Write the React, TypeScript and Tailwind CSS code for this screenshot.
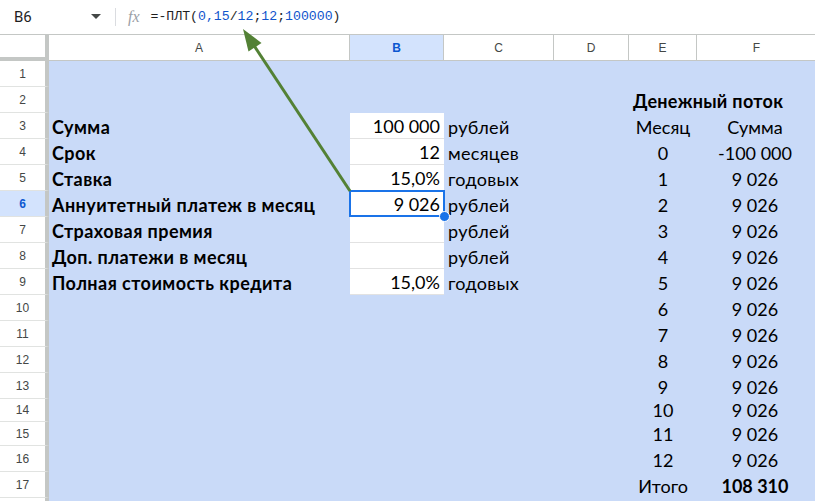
import React from 'react';

// column widths in px: row header, A..F
const cols = [
  { key: 'A', w: 'w-[301px]' },
  { key: 'B', w: 'w-[94px]' },
  { key: 'C', w: 'w-[110px]' },
  { key: 'D', w: 'w-[75px]' },
  { key: 'E', w: 'w-[68px]' },
  { key: 'F', w: 'w-[120px]' },
];

type Row = {
  n: number;
  h: string;
  a?: string;
  b?: string;
  white?: boolean;
  c?: string;
  e?: string;
  f?: string;
  bold?: boolean;
  title?: string;
  hideNum?: boolean;
};

const rows: Row[] = [
  { n: 1, h: 'h-[26px]' },
  { n: 2, h: 'h-[26px]', title: 'Денежный поток' },
  { n: 3, h: 'h-[26px]', a: 'Сумма', b: '100 000', white: true, c: 'рублей', e: 'Месяц', f: 'Сумма' },
  { n: 4, h: 'h-[26px]', a: 'Срок', b: '12', white: true, c: 'месяцев', e: '0', f: '-100 000' },
  { n: 5, h: 'h-[26px]', a: 'Ставка', b: '15,0%', white: true, c: 'годовых', e: '1', f: '9 026' },
  { n: 6, h: 'h-[26px]', a: 'Аннуитетный платеж в месяц', b: '9 026', white: true, c: 'рублей', e: '2', f: '9 026' },
  { n: 7, h: 'h-[26px]', a: 'Страховая премия', b: '', white: true, c: 'рублей', e: '3', f: '9 026' },
  { n: 8, h: 'h-[26px]', a: 'Доп. платежи в месяц', b: '', white: true, c: 'рублей', e: '4', f: '9 026' },
  { n: 9, h: 'h-[26px]', a: 'Полная стоимость кредита', b: '15,0%', white: true, c: 'годовых', e: '5', f: '9 026' },
  { n: 10, h: 'h-[26px]', e: '6', f: '9 026' },
  { n: 11, h: 'h-[26px]', e: '7', f: '9 026' },
  { n: 12, h: 'h-[26px]', e: '8', f: '9 026' },
  { n: 13, h: 'h-[26px]', e: '9', f: '9 026' },
  { n: 14, h: 'h-[23px]', e: '10', f: '9 026' },
  { n: 15, h: 'h-[24px]', e: '11', f: '9 026' },
  { n: 16, h: 'h-[26px]', e: '12', f: '9 026' },
  { n: 17, h: 'h-[26px]', e: 'Итого', f: '108 310', bold: true },
  { n: 18, h: 'h-[26px]', hideNum: true },
];

const cellFont = "font-['Lato',sans-serif] text-[18px] text-black leading-none";

function FormulaBar() {
  return (
    <div className="h-[34px] flex items-center bg-white font-['Roboto','Liberation_Sans',sans-serif]">
      <div className="w-[115px] flex items-center pl-[14px] pr-[14px]">
        <span className="text-[15px] text-[#1f1f1f] flex-1">B6</span>
        <svg width="10" height="6" viewBox="0 0 10 6">
          <path d="M0 0 L10 0 L5 5 Z" fill="#444746" />
        </svg>
      </div>
      <div className="w-px h-[18px] bg-[#dadce0]" />
      <span className="ml-[12px] mr-[11px] text-[16px] italic text-[#9aa0a6] font-['Liberation_Serif',serif]">fx</span>
      <span className="font-['Liberation_Mono',monospace] text-[13.2px] text-[#1f1f1f] whitespace-pre">
        =-ПЛТ(<span className="text-[#1155cc]">0,15</span>/<span className="text-[#1155cc]">12</span>;<span className="text-[#1155cc]">12</span>;<span className="text-[#1155cc]">100000</span>)
      </span>
    </div>
  );
}

function HeaderRow() {
  return (
    <div className="flex h-[27px] border-t border-[#c4c7c5] font-['Liberation_Sans',Arial,sans-serif] text-[12px]">
      <div className="w-[49px] shrink-0 bg-white border-r-[4px] border-b-[4px] border-[#c4c7c5] box-border" />
      {cols.map((c) => (
        <div
          key={c.key}
          className={`${c.w} shrink-0 flex items-center justify-center border-r border-b border-[#c4c7c5] ${
            c.key === 'B' ? 'bg-[#d3e3fd] text-[#0b57d0] font-bold' : 'bg-white text-[#444746]'
          }`}
        >
          {c.key}
        </div>
      ))}
    </div>
  );
}

function SheetRow({ r }: { r: Row }) {
  const sel = r.n === 6;
  return (
    <div className={`flex ${r.h}`}>
      <div
        className={`w-[49px] shrink-0 flex items-center justify-center border-r-[4px] border-b border-r-[#c4c7c5] border-b-[#e1e3e1] font-['Liberation_Sans',Arial,sans-serif] text-[12px] ${
          sel ? 'bg-[#d3e3fd] text-[#0b57d0] font-bold' : 'bg-white text-[#444746]'
        }`}
      >
        {r.hideNum ? '' : r.n}
      </div>
      <div className={`flex-1 flex bg-[#c9daf8] ${cellFont}`}>
        <div className="w-[301px] shrink-0 flex items-end pb-[3px] pl-[3px] font-bold tracking-[0.45px] whitespace-nowrap">
          {r.a}
        </div>
        <div
          className={`w-[94px] shrink-0 relative flex items-end justify-end pb-[3px] pr-[4px] ${
            r.white ? 'bg-white border-b border-[#e2e2e2]' : ''
          } ${sel ? 'z-10' : ''}`}
        >
          {r.b}
          {sel && (
            <>
              <div className="absolute -inset-x-px -top-px -bottom-px border-2 border-[#1a73e8]" />
              <div className="absolute right-[-6px] bottom-[-6px] w-[11px] h-[11px] rounded-full bg-[#1a73e8] border-[1.5px] border-white" />
            </>
          )}
        </div>
        <div className="w-[110px] shrink-0 flex items-end pb-[3px] pl-[4px] tracking-[0.3px] whitespace-nowrap">{r.c}</div>
        <div className="w-[75px] shrink-0" />
        <div className="w-[68px] shrink-0 relative flex items-end justify-center pb-[3px] whitespace-nowrap">
          {r.title ? (
            <span className="absolute left-[4px] bottom-[3px] font-bold tracking-[0.3px]">{r.title}</span>
          ) : (
            r.e
          )}
        </div>
        <div className={`w-[120px] shrink-0 flex items-end justify-center pb-[3px] pr-[4px] ${r.bold ? 'font-bold' : ''}`}>
          {r.f}
        </div>
      </div>
    </div>
  );
}

export default function App() {
  return (
    <div className="relative w-[815px] h-[501px] overflow-hidden bg-white">
      <FormulaBar />
      <HeaderRow />
      {rows.map((r) => (
        <SheetRow key={r.n} r={r} />
      ))}
      <svg className="absolute inset-0 pointer-events-none z-20" width="815" height="501">
        <line x1="350" y1="191" x2="253" y2="44" stroke="#538135" strokeWidth="3" />
        <polygon points="243,29 261.5,43 248.5,51.5" fill="#538135" />
      </svg>
    </div>
  );
}
